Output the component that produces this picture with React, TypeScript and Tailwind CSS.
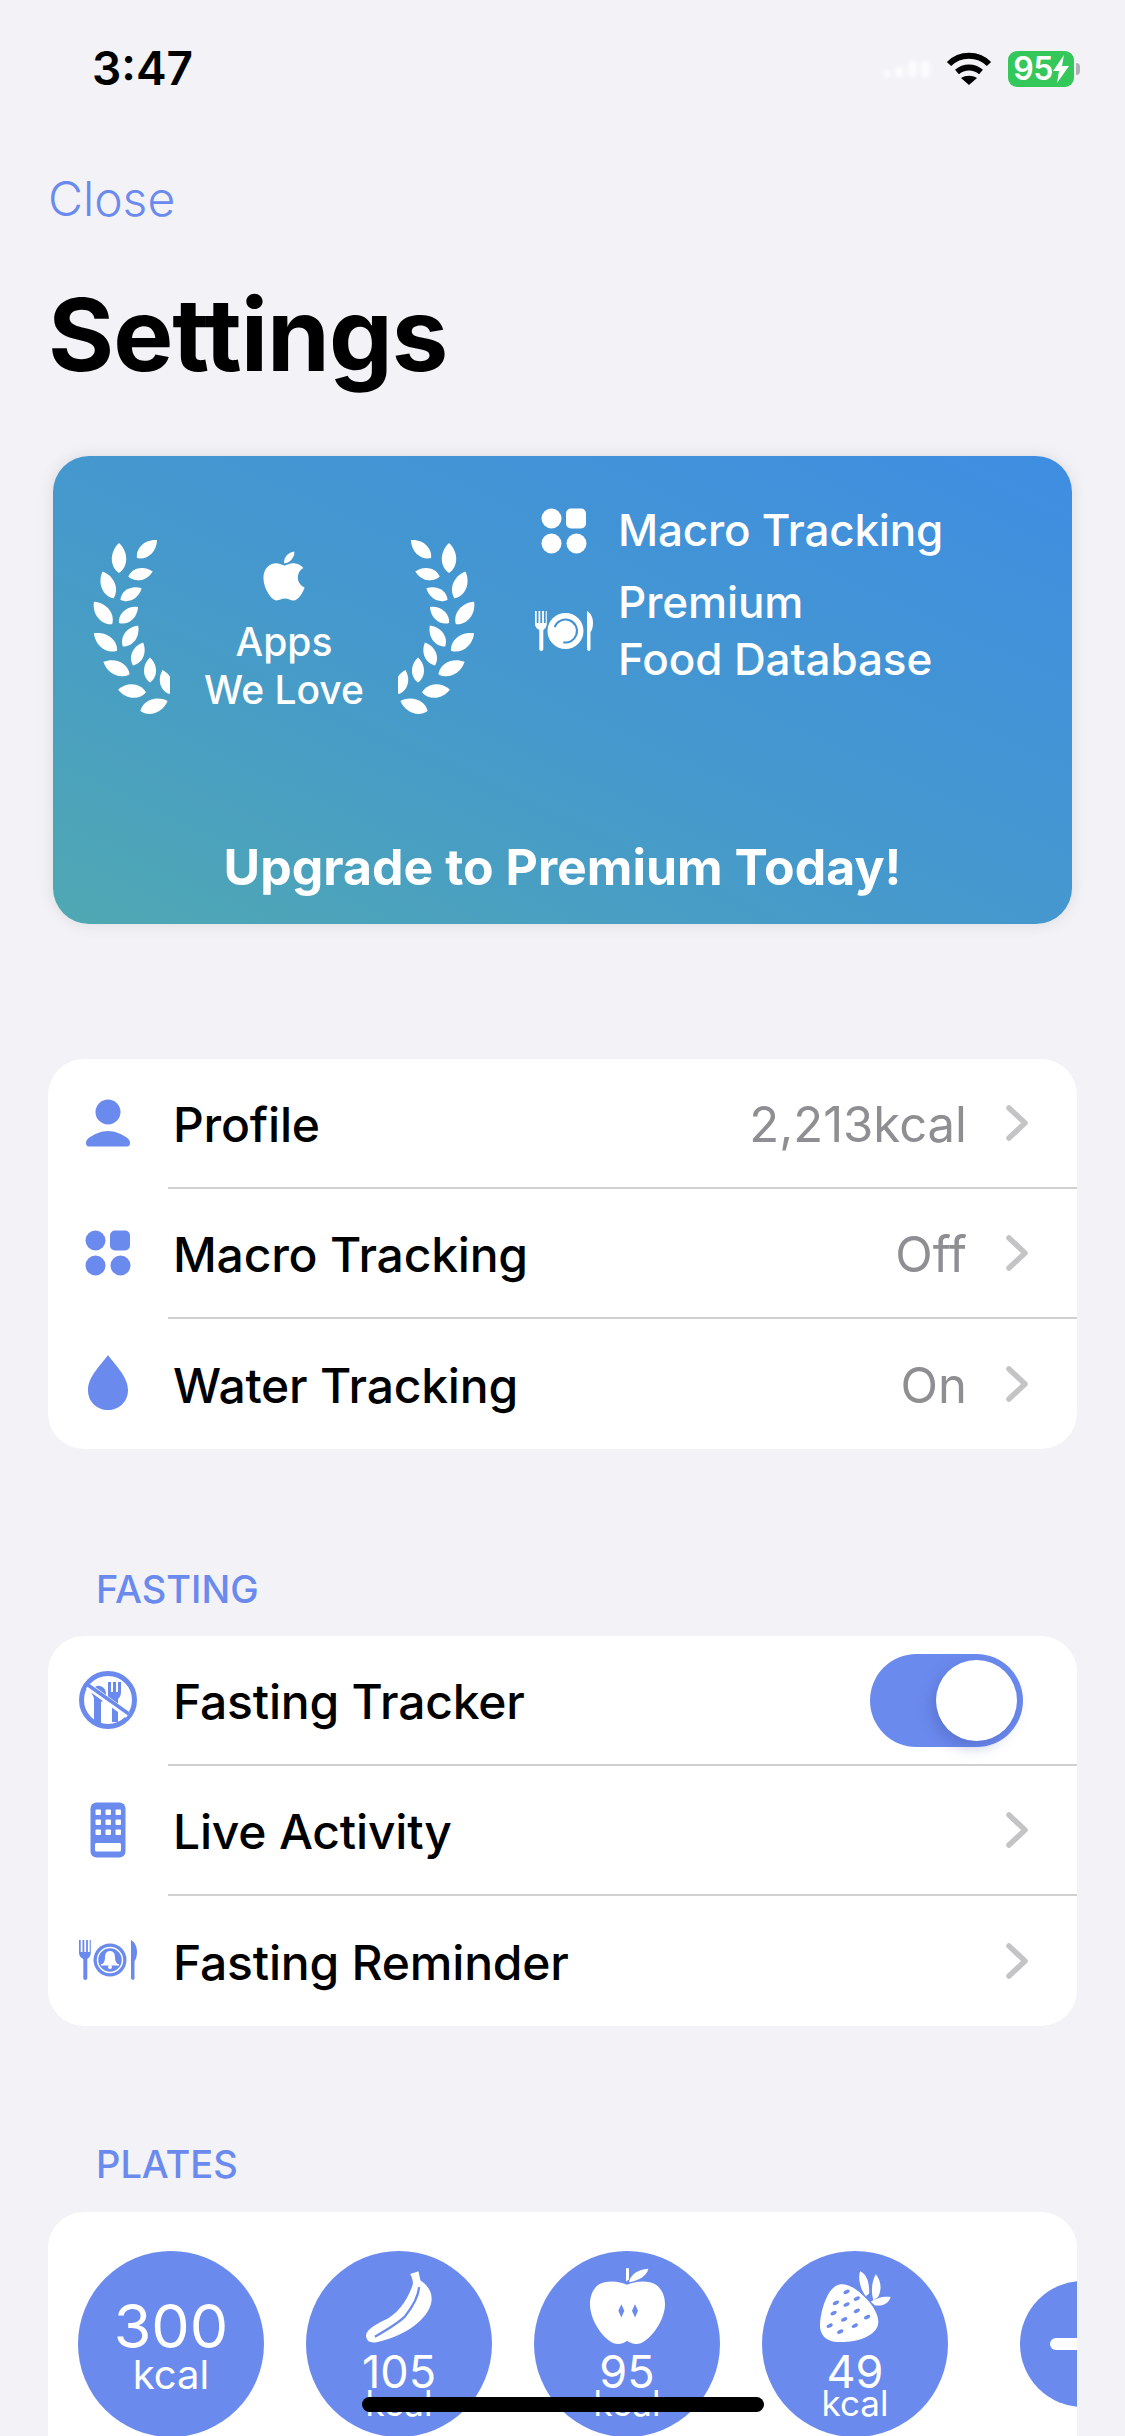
import React from "react";
import { FaApple } from "react-icons/fa";

const blue = "#6b8aee";

const leaves: [number, number, number, number][] = [
  [119, 558, 30, 0], [147, 549, 27, 48], [140.5, 574, 25, 78], [108, 585, 29, -22], [131, 594, 24, 62],
  [103, 613, 29, -39], [128.5, 615, 25, 50], [105.5, 642, 29, -53], [130.5, 636, 26, 36], [138, 654, 25, 24],
  [116.5, 668, 29, -65], [150, 670, 25, 0], [132, 691, 28, -84], [166, 682, 25, -16], [154, 706, 29, 70],
];

function Laurel({ flip }: { flip?: boolean }) {
  return (
    <svg width="80" height="180" viewBox="90 535 80 180" className={flip ? "-scale-x-100" : ""} fill="#fff">
      {leaves.map(([x, y, l, a], i) => (
        <path
          key={i}
          transform={`translate(${x} ${y}) rotate(${a})`}
          d={`M0 ${-l / 2}C${l * 0.34} ${-l * 0.18} ${l * 0.3} ${l * 0.3} 0 ${l / 2}C${-l * 0.3} ${l * 0.3} ${-l * 0.34} ${-l * 0.18} 0 ${-l / 2}Z`}
        />
      ))}
    </svg>
  );
}

function Grid({ color, size }: { color: string; size: number }) {
  return (
    <svg width={size} height={size} viewBox="0 0 46 46" fill={color}>
      <circle cx="10.5" cy="10.5" r="10" />
      <rect x="25" y="0.5" width="20" height="20" rx="5" />
      <circle cx="10.5" cy="35.5" r="10" />
      <circle cx="35.5" cy="35.5" r="10" />
    </svg>
  );
}

function Person() {
  return (
    <svg width="46" height="48" viewBox="0 0 46 48" fill={blue}>
      <circle cx="23" cy="13" r="12.5" />
      <path d="M1 44c0-2 1-4 4-6 5-3 11-6 18-6s13 3 18 6c3 2 4 4 4 6 0 2-1 3.500-3 3.500H4c-2 0-3-1.500-3-3.500Z" />
    </svg>
  );
}

function Drop() {
  return (
    <svg width="42" height="56" viewBox="0 0 42 56" fill={blue}>
      <path d="M21 0C27 9 41 21 41 35 41 47 32 55 21 55 10 55 1 47 1 35 1 21 15 9 21 0Z" />
    </svg>
  );
}

function NoFood() {
  return (
    <svg width="58" height="58" viewBox="0 0 58 58">
      <circle cx="29" cy="29" r="26.500" fill="none" stroke={blue} strokeWidth="5" />
      <path fill={blue} d="M18 15c5-1 9 3 9 8 0 4-2 7-5 8l0 21-7 0 0-21c0-1 0-3 0-4l-3-6c0-3 3-5 6-6Z" />
      <path fill={blue} d="M29 11h3v10h2V11h3v10h2V11h3v10c0 3-1 5-3 7l0 23-6 0 0-20-4-4 0-6Z" />
      <path stroke="#fff" strokeWidth="7" d="M9 15 49 44" />
      <path stroke={blue} strokeWidth="3.500" d="M9 14 50 43" />
    </svg>
  );
}

function Keypad() {
  const dots: [number, number][] = [];
  for (const y of [10, 20, 30]) for (const x of [8, 18, 28]) dots.push([x, y]);
  return (
    <svg width="36" height="56" viewBox="0 0 36 56">
      <rect x="0.500" y="0.500" width="35" height="55" rx="6" fill={blue} />
      {dots.map(([x, y], i) => (
        <rect key={i} x={x - 2.500} y={y - 2.500} width="5.500" height="5.500" rx="1" fill="#fff" />
      ))}
      <rect x="5" y="41" width="26" height="8.500" rx="1.500" fill="#fff" />
    </svg>
  );
}

function PlateSet({ color, bell, w, h }: { color: string; bell?: boolean; w: number; h: number }) {
  return (
    <svg width={w} height={h} viewBox="0 0 58 40" fill={color}>
      <path d="M0 0h1.700v12h1.800V0h1.800v12h1.800V0h1.800v12h1.800V0h1.100v13c0 3-2 5-3.500 6v19c0 1-.8 2-2 2s-2-1-2-2V19C2 18 0 16 0 13Z" />
      <path d="M52 0c4 2 6 7 6 12 0 5-1.500 8-2.500 9v17c0 1-.8 2-1.500 2s-2-1-2-2Z" />
      {bell ? (
        <g>
          <circle cx="31" cy="20" r="16.500" />
          <circle cx="31" cy="20" r="12.500" fill="none" stroke="#fff" strokeWidth="1.500" />
          <path fill="#fff" d="M31 11c3.500 0 5 3 5 6 0 3 .5 5 2.500 7h-15c2-2 2.500-4 2.500-7 0-3 1.500-6 5-6Z" />
          <rect x="22" y="24" width="18" height="1.500" fill="#fff" />
          <circle cx="31" cy="27" r="2" fill="#fff" />
        </g>
      ) : (
        <g>
          <circle cx="30.500" cy="20" r="18" />
          <circle cx="30.500" cy="20" r="11.500" fill="none" stroke="#4391d2" strokeWidth="2" strokeDasharray="52 20" transform="rotate(200 30.500 20)" />
        </g>
      )}
    </svg>
  );
}

function Banana() {
  return (
    <svg width="66" height="72" viewBox="73 57 200 216" fill="#fff">
      <path d="M207 65 232 57 238 85C256 96 272 115 272 140 272 190 205 250 105 272 85 275 73 268 73 250 78 232 100 220 125 207 165 190 195 150 212 105 216 95 218 88 207 65Z" />
      <path d="M234 105C232 130 222 155 190 195 165 218 130 238 100 255" fill="none" stroke="#6b8aee" strokeWidth="7" />
    </svg>
  );
}

function AppleFruit() {
  return (
    <svg width="75" height="77" viewBox="87 50 225 230" fill="#fff">
      <path d="M195 50H204V84L195 90Z" />
      <path d="M205 88C212 68 230 55 262 52 258 72 235 88 205 92Z" />
      <path d="M198 100C175 88 135 85 112 100 95 112 87 135 87 158 87 205 125 262 160 276 175 280 190 275 198 268 208 275 222 280 237 276 272 262 312 205 312 158 312 135 303 112 285 100 262 85 222 88 198 100Z" />
      <path fill="#6b8aee" d="M181 158 190 178 181 198 172 178ZM222 158 231 178 222 198 213 178Z" />
    </svg>
  );
}

function Strawberry() {
  const seeds: [number, number][] = [
    [167, 120], [198, 140], [135, 153], [167, 158], [128, 184], [198, 177], [160, 203], [229, 196], [116, 222], [192, 222], [148, 240],
  ];
  return (
    <svg width="71" height="72" viewBox="87 58 214 215" fill="#fff">
      <path d="M150 97C175 95 205 115 235 150 258 178 268 205 260 225 245 258 190 275 130 270 100 265 85 245 87 215 90 175 105 130 125 110 132 102 140 98 150 97Z" />
      <path d="M208 58C225 65 237 90 235 125L225 133C210 115 200 80 208 58Z" />
      <path d="M255 67C270 85 275 110 262 135L248 145C242 125 240 95 255 67Z" />
      <path d="M300 135C295 155 270 165 252 160L240 150C255 138 280 132 300 135Z" />
      {seeds.map(([x, y], i) => (
        <ellipse key={i} cx={x} cy={y} rx="10" ry="5.500" fill="#6b8aee" transform={`rotate(-28 ${x} ${y})`} />
      ))}
    </svg>
  );
}

function Chevron() {
  return (
    <svg width="24" height="38" viewBox="0 0 24 38" fill="none" stroke="#c4c4c7" strokeWidth="5.500" strokeLinecap="round" strokeLinejoin="round">
      <path d="M4 4 20 19 4 34" />
    </svg>
  );
}

function Row({ icon, label, value, last, control }: { icon: React.ReactNode; label: string; value?: string; last?: boolean; control?: React.ReactNode }) {
  return (
    <div className="flex h-[130px] items-stretch">
      <div className="flex w-[120px] shrink-0 items-center justify-center pb-[2px]">{icon}</div>
      <div className={`flex flex-1 items-center pl-[5px] ${last ? "" : "border-b-2 border-[#d0d0d2]"}`}>
        <span className="flex-1 pt-[3px] text-[48px] font-medium tracking-[-0.2px] text-black">{label}</span>
        {value && <span className="mr-[38px] pt-[3px] text-[49px] text-[#8e8e93]">{value}</span>}
        {control ?? (
          <span className="mr-[48px] flex"><Chevron /></span>
        )}
      </div>
    </div>
  );
}

function Plate({ icon, value, small }: { icon?: React.ReactNode; value: string; small?: boolean }) {
  return (
    <div className="flex h-[186px] w-[186px] shrink-0 flex-col items-center overflow-hidden rounded-full bg-[#6b8aee] text-white">
      {small ? (
        <>
          <div className="mt-[18px] flex h-[75px] items-center justify-center">{icon}</div>
          <span className="mt-[9px] text-[45px] leading-[38px]">{value}</span>
          <span className="text-[35px] leading-[24px]">kcal</span>
        </>
      ) : (
        <>
          <span className="mt-[43px] text-[61px] leading-[64px]">{value}</span>
          <span className="mt-[3px] text-[40px] leading-[28px]">kcal</span>
        </>
      )}
    </div>
  );
}

export default function App() {
  return (
    <div className="relative h-[2436px] w-[1125px] overflow-hidden bg-[#f2f2f7] font-['Inter',sans-serif]">
      {/* status bar */}
      <div className="flex h-[170px] items-start pl-[92px] pr-[45px] pt-[41px]">
        <span className="text-[46px] font-semibold leading-[54px] text-black">3:47</span>
        <div className="ml-auto flex items-center pt-[10px]">
          <div className="mr-[16px] flex items-end gap-[4px] opacity-80 blur-[2px]">
            <div className="h-[8px] w-[8px] rounded-full bg-white" />
            <div className="h-[12px] w-[9px] rounded-full bg-white" />
            <div className="h-[18px] w-[9px] rounded-full bg-white" />
            <div className="h-[18px] w-[9px] rounded-full bg-white" />
          </div>
          <svg width="46" height="34" viewBox="0 0 46 34" fill="none" stroke="#000" strokeWidth="6">
            <path d="M3 12C14 1 32 1 43 12" />
            <path d="M11 20c7-6 17-6 24 0" />
            <path d="M23 33 15 26c5-3 11-3 16 0Z" fill="#000" stroke="none" />
          </svg>
          <div className="ml-[16px] flex h-[36px] w-[66px] items-center justify-center rounded-[9px] bg-[#34c759] text-[32px] font-semibold leading-none tracking-[-0.5px] text-white">
            95
            <svg width="16" height="28" viewBox="0 0 16 28" fill="#fff">
              <path d="M11 0 0 16h6L4 28 16 11H9Z" />
            </svg>
          </div>
          <div className="ml-[2px] h-[12px] w-[4px] rounded-r-full bg-[#b0b0b4]" />
        </div>
      </div>

      {/* header */}
      <div className="pl-[48px] text-[48px] font-light leading-[58px] text-[#6b8aee]">Close</div>
      <h1 className="mt-[48px] pl-[48px] text-[101px] font-bold leading-[116px] tracking-[-1px] text-black">Settings</h1>

      {/* banner */}
      <div className="mx-[53px] mt-[64px] flex h-[468px] flex-col justify-between rounded-[36px] bg-[linear-gradient(205deg,#3f8de2_0%,#4599cc_55%,#4fa8b2_100%)] shadow-[0_0_16px_rgba(0,0,0,0.1)] text-white">
        <div className="flex pl-[37px] pt-[79px]">
          <div className="flex items-start">
            <Laurel />
            <div className="flex w-[228px] flex-col items-center">
              <FaApple className="mt-[13px] h-[56px] w-[56px]" />
              <span className="mt-[14px] text-[39px] font-medium leading-[48px]">Apps</span>
              <span className="text-[39px] font-medium leading-[48px]">We Love</span>
            </div>
            <Laurel flip />
          </div>
          <div className="ml-[55px] mt-[-33px] flex flex-col">
            <div className="flex items-center">
              <div className="flex w-[85px] justify-center pr-[24px]"><Grid color="#fff" size={46} /></div>
              <span className="text-[44px] font-medium leading-[57px] tracking-[-0.2px]">Macro Tracking</span>
            </div>
            <div className="mt-[15px] flex items-center">
              <div className="flex w-[85px] justify-center pr-[24px]"><PlateSet color="#fff" w={58} h={40} /></div>
              <span className="text-[44px] font-medium leading-[57px] tracking-[-0.1px]">Premium<br />Food Database</span>
            </div>
          </div>
        </div>
        <div className="pb-[27px] text-center text-[50px] font-bold leading-[60px]">Upgrade to Premium Today!</div>
      </div>

      {/* list 1 */}
      <div className="mx-[48px] mt-[135px] overflow-hidden rounded-[36px] bg-white">
        <Row icon={<Person />} label="Profile" value="2,213kcal" />
        <Row icon={<Grid color={blue} size={46} />} label="Macro Tracking" value="Off" />
        <Row icon={<Drop />} label="Water Tracking" value="On" last />
      </div>

      <div className="mt-[118px] pl-[96px] text-[38px] font-medium leading-[44px] text-[#6b8aee]">FASTING</div>
      <div className="mx-[48px] mt-[25px] overflow-hidden rounded-[36px] bg-white">
        <Row
          icon={<NoFood />}
          label="Fasting Tracker"
          control={
            <div className="mr-[54px] flex h-[93px] w-[153px] items-center justify-end rounded-full bg-[#6b8aee] pr-[6px]">
              <div className="h-[81px] w-[81px] rounded-full bg-white shadow-[-4px_6px_14px_rgba(60,80,160,0.35)]" />
            </div>
          }
        />
        <Row icon={<Keypad />} label="Live Activity" />
        <Row icon={<PlateSet color={blue} bell w={58} h={40} />} label="Fasting Reminder" last />
      </div>

      <div className="mt-[116px] pl-[96px] text-[38px] font-medium leading-[44px] text-[#6b8aee]">PLATES</div>
      <div className="mx-[48px] mt-[26px] flex h-[300px] items-start gap-[42px] overflow-hidden rounded-[36px] bg-white pl-[30px] pt-[39px]">
        <Plate value="300" />
        <Plate value="105" small icon={<Banana />} />
        <Plate value="95" small icon={<AppleFruit />} />
        <Plate value="49" small icon={<Strawberry />} />
        <div className="ml-[30px] mt-[30px] flex h-[126px] w-[126px] shrink-0 items-center rounded-full bg-[#6b8aee] pl-[30px]">
          <div className="h-[12px] w-[60px] rounded-full bg-white" />
        </div>
      </div>

      {/* home indicator */}
      <div className="absolute left-[362px] top-[2397px] h-[15px] w-[402px] rounded-full bg-black" />
    </div>
  );
}
